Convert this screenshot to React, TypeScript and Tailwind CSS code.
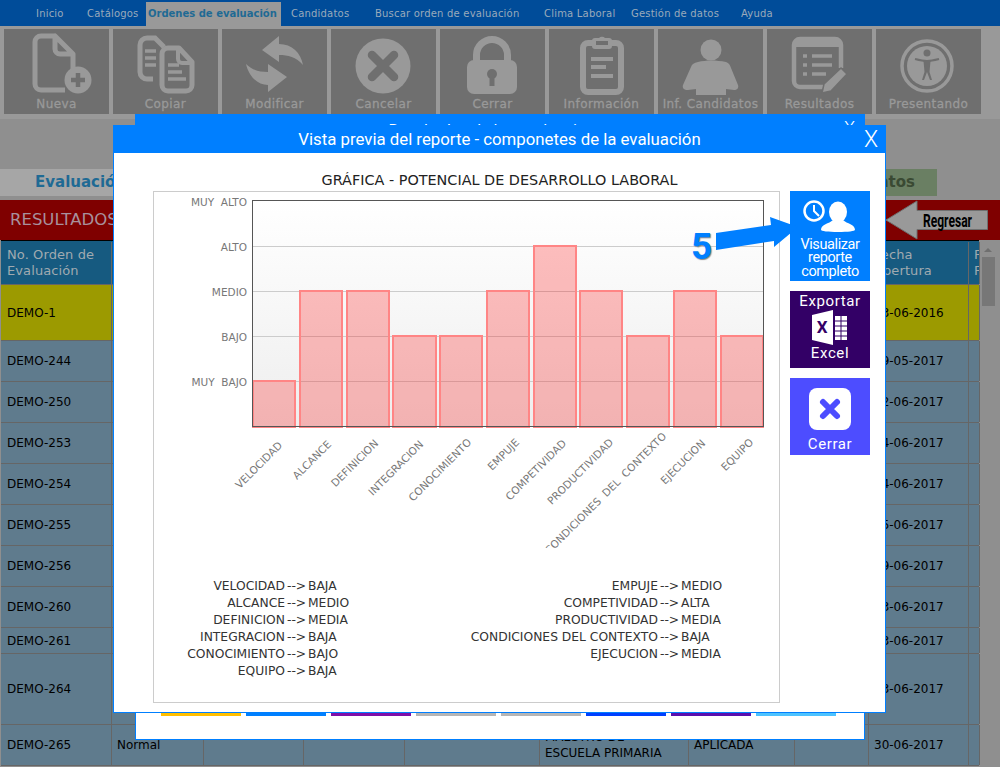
import React from "react";

const dejavu = "font-['DejaVu_Sans',sans-serif]";
const roboto = "font-['Roboto',sans-serif]";

const navItems = [
  { label: "Inicio", cls: "w-[51px]" },
  { label: "Catálogos", cls: "w-[59px]" },
  { label: "Ordenes de evaluación", cls: "w-[135px] pl-[2px] bg-[#999999] text-[#1f6a94] font-bold h-[24px] mt-[2px] leading-[24px] tracking-normal" },
  { label: "Candidatos", cls: "w-[84px] pl-[10px]" },
  { label: "Buscar orden de evaluación", cls: "w-[169px] pl-[10px]" },
  { label: "Clima Laboral", cls: "w-[87px] pl-[10px]" },
  { label: "Gestión de datos", cls: "w-[110px] pl-[10px]" },
  { label: "Ayuda", cls: "w-[60px] pl-[10px]" },
];

const L = "#999999";
const D = "#6f6f6f";

function IconNueva() {
  return (
    <>
      <path d="M51 7H37a6 6 0 0 0-6 6v42a6 6 0 0 0 6 6h24M69 43V25L51 7v13a5 5 0 0 0 5 5h13" fill="none" stroke={L} strokeWidth="5" strokeLinejoin="round" />
      <circle cx="74" cy="51" r="13.5" fill={L} />
      <path d="M74 44v14M67 51h14" stroke={D} strokeWidth="4.5" />
    </>
  );
}

function IconCopiar() {
  return (
    <>
      <path d="M40 50h-6a7 7 0 0 1-7-7V16a7 7 0 0 1 7-7h8l9 9" fill="none" stroke={L} strokeWidth="5" />
      <path d="M32 22h11M32 29h11M32 36h11" stroke={L} strokeWidth="3.5" />
      <path d="M55 19h11l13 14v23a6 6 0 0 1-6 6H55a6 6 0 0 1-6-6V25a6 6 0 0 1 6-6z" fill={D} stroke={L} strokeWidth="5" strokeLinejoin="round" />
      <path d="M65 20v10a4 4 0 0 0 4 4h10" fill="none" stroke={L} strokeWidth="4" />
      <path d="M55 36h11M55 43h14M55 50h18" stroke={L} strokeWidth="3.5" />
    </>
  );
}

function IconModificar() {
  return (
    <>
      <path d="M40 21L57 7v8c13 0 22 9 24 21-7-8-15-10-24-10v7z" fill={L} />
      <path d="M65 48L46 63v-7c-10 0-19-8-22-21 6 6 13 8 22 8v-8z" fill={L} />
    </>
  );
}

function IconCancelar() {
  return (
    <>
      <circle cx="52" cy="37" r="27.5" fill={L} />
      <path d="M41 26l22 22M63 26L41 48" stroke={D} strokeWidth="8.5" strokeLinecap="round" />
    </>
  );
}

function IconCerrar() {
  return (
    <>
      <path d="M36.500 33V26a15.500 15.500 0 0 1 31 0v7" fill="none" stroke={L} strokeWidth="7" />
      <rect x="27" y="31" width="50" height="34" rx="7" fill={L} />
      <circle cx="52" cy="45" r="5" fill={D} />
      <path d="M52 46v11" stroke={D} strokeWidth="5" />
    </>
  );
}

function IconInformacion() {
  return (
    <>
      <rect x="34" y="14" width="38" height="49" rx="5" fill="none" stroke={L} strokeWidth="6" />
      <path d="M46 9h4a4 4 0 0 1 6 0h4a3 3 0 0 1 3 3v5a3 3 0 0 1-3 3H46a3 3 0 0 1-3-3v-5a3 3 0 0 1 3-3z" fill={L} />
      <rect x="47" y="12" width="12" height="4" fill={D} />
      <path d="M42 30h22M42 38h15M42 47h22" stroke={L} strokeWidth="4" />
    </>
  );
}

function IconCandidatos() {
  return (
    <>
      <circle cx="53" cy="21" r="10.5" fill={L} />
      <path d="M40 33c8-2 18-2 28 0 3 1 4 3 5 6l7 17c1 3-1 5-4 5l-8-1v6H38v-6l-8 1c-4 0-6-2-5-5l8-18c1-3 3-4 7-5z" fill={L} />
    </>
  );
}

function IconResultados() {
  return (
    <>
      <path d="M56 58H33a6 6 0 0 1-6-6V16a6 6 0 0 1 6-6h35a6 6 0 0 1 6 6v23" fill="none" stroke={L} strokeWidth="4.500" />
      <path d="M28 12h45v6H28z" fill={L} />
      <path d="M36 27h4M45 27h20M36 36h4M45 36h20M36 45h4M45 45h14" stroke={L} strokeWidth="3.500" />
      <path d="M55 64l2-9 17-16 6 6-16 17z" fill={L} stroke={D} strokeWidth="1.500" />
    </>
  );
}

function IconPresentando() {
  return (
    <>
      <circle cx="51" cy="37" r="25" fill="none" stroke={L} strokeWidth="3.500" />
      <circle cx="51" cy="37" r="20" fill={L} />
      <circle cx="51" cy="24" r="3.500" fill={D} />
      <path d="M39 30c4 1 8 2 12 2s8-1 12-2" fill="none" stroke={D} strokeWidth="2" />
      <path d="M47.500 32h7l-1 11 2.500 8h-2l-3-8-3 8h-2l2.500-8z" fill={D} />
    </>
  );
}

const tiles = [
  { label: "Nueva", Icon: IconNueva },
  { label: "Copiar", Icon: IconCopiar },
  { label: "Modificar", Icon: IconModificar },
  { label: "Cancelar", Icon: IconCancelar },
  { label: "Cerrar", Icon: IconCerrar },
  { label: "Información", Icon: IconInformacion },
  { label: "Inf. Candidatos", Icon: IconCandidatos },
  { label: "Resultados", Icon: IconResultados },
  { label: "Presentando", Icon: IconPresentando },
];

const rows = [
  { id: "DEMO-1", date: "03-06-2016", h: "h-[56px]", bg: "bg-[#9c9a00]" },
  { id: "DEMO-244", date: "09-05-2017", h: "h-[41px]", bg: "bg-[#5f7b8d]" },
  { id: "DEMO-250", date: "12-06-2017", h: "h-[41px]", bg: "bg-[#5f7b8d]" },
  { id: "DEMO-253", date: "14-06-2017", h: "h-[41px]", bg: "bg-[#5f7b8d]" },
  { id: "DEMO-254", date: "14-06-2017", h: "h-[41px]", bg: "bg-[#5f7b8d]" },
  { id: "DEMO-255", date: "15-06-2017", h: "h-[41px]", bg: "bg-[#5f7b8d]" },
  { id: "DEMO-256", date: "19-06-2017", h: "h-[41px]", bg: "bg-[#5f7b8d]" },
  { id: "DEMO-260", date: "13-06-2017", h: "h-[41px]", bg: "bg-[#5f7b8d]" },
  { id: "DEMO-261", date: "13-06-2017", h: "h-[26px]", bg: "bg-[#5f7b8d]" },
  { id: "DEMO-264", date: "13-06-2017", h: "h-[71px]", bg: "bg-[#5f7b8d]" },
  { id: "DEMO-265", date: "30-06-2017", h: "h-[41px]", bg: "bg-[#5f7b8d]" },
];

const tableCols = "grid-cols-[111px_92px_100px_101px_135px_149px_106px_74px_100px_10px]";
const cell = "border-r border-[#666666] px-[5px] overflow-hidden flex items-center whitespace-nowrap";

const bars = [
  { x: 253, w: 42, y: 381 },
  { x: 300, w: 42, y: 291 },
  { x: 347, w: 42, y: 291 },
  { x: 393, w: 43, y: 336 },
  { x: 440, w: 42, y: 336 },
  { x: 487, w: 42, y: 291 },
  { x: 534, w: 42, y: 246 },
  { x: 580, w: 42, y: 291 },
  { x: 627, w: 42, y: 336 },
  { x: 674, w: 42, y: 291 },
  { x: 721, w: 42, y: 336 },
];

const xLabels = [
  { t: "VELOCIDAD", x: 283, y: 446 },
  { t: "ALCANCE", x: 332, y: 445 },
  { t: "DEFINICION", x: 379, y: 444 },
  { t: "INTEGRACION", x: 424, y: 445 },
  { t: "CONOCIMIENTO", x: 472, y: 443 },
  { t: "EMPUJE", x: 520, y: 443 },
  { t: "COMPETIVIDAD", x: 567, y: 444 },
  { t: "PRODUCTIVIDAD", x: 614, y: 443 },
  { t: "CONDICIONES  DEL  CONTEXTO", x: 667, y: 437 },
  { t: "EJECUCION", x: 706, y: 444 },
  { t: "EQUIPO", x: 754, y: 443 },
];

const yLabels = [
  { t: "MUY  ALTO", y: 206 },
  { t: "ALTO", y: 251 },
  { t: "MEDIO", y: 296 },
  { t: "BAJO", y: 341 },
  { t: "MUY  BAJO", y: 386 },
];

const legendLeft = [
  ["VELOCIDAD", "BAJA"],
  ["ALCANCE", "MEDIO"],
  ["DEFINICION", "MEDIA"],
  ["INTEGRACION", "BAJA"],
  ["CONOCIMIENTO", "BAJO"],
  ["EQUIPO", "BAJA"],
];

const legendRight = [
  ["EMPUJE", "MEDIO"],
  ["COMPETIVIDAD", "ALTA"],
  ["PRODUCTIVIDAD", "MEDIA"],
  ["CONDICIONES DEL CONTEXTO", "BAJA"],
  ["EJECUCION", "MEDIA"],
];

const colorBars = ["bg-[#ffbf00]", "bg-[#0080ff]", "bg-[#7f0fa8]", "bg-[#b5b5b5]", "bg-[#b5b5b5]", "bg-[#0040ff]", "bg-[#5a0fae]", "bg-[#4dc3ff]"];

function Chart() {
  return (
    <svg width="625" height="356" viewBox="154 192 625 356" className="block">
      <defs>
        <linearGradient id="plotBg" x1="0" y1="0" x2="0" y2="1">
          <stop offset="0" stopColor="#ffffff" />
          <stop offset="1" stopColor="#eeeeee" />
        </linearGradient>
      </defs>
      <rect x="252.5" y="200.5" width="511" height="226" fill="url(#plotBg)" />
      {[246, 291, 336, 381].map((y) => (
        <line key={y} x1="253" x2="763" y1={y + 0.5} y2={y + 0.5} stroke="#cccccc" />
      ))}
      {bars.map((b) => (
        <rect key={b.x} x={b.x} y={b.y} width={b.w} height={427 - b.y} fill="#ff0000" fillOpacity="0.25" stroke="#ff8585" strokeWidth="2" />
      ))}
      <rect x="252.5" y="200.5" width="511" height="226" fill="none" stroke="#555555" />
      <g fontFamily="DejaVu Sans, sans-serif" fontSize="10.5" fill="#777777">
        {yLabels.map((l) => (
          <text key={l.t} x="247" y={l.y} textAnchor="end" xmlSpace="preserve">
            {l.t}
          </text>
        ))}
        {xLabels.map((l) => (
          <text key={l.t} x={l.x} y={l.y} textAnchor="end" transform={`rotate(-45 ${l.x} ${l.y})`} xmlSpace="preserve">
            {l.t}
          </text>
        ))}
      </g>
    </svg>
  );
}

function LegendRow({ name, value, nameW }: { name: string; value: string; nameW: string }) {
  return (
    <div className="flex h-[17px] items-center whitespace-nowrap">
      <span className={`${nameW} text-right`}>{name}</span>
      <span className="w-[23px] pl-[2px]">--&gt;</span>
      <span>{value}</span>
    </div>
  );
}

export default function App() {
  return (
    <div className={`relative h-[767px] w-[1000px] overflow-hidden bg-[#8f8f8f] ${dejavu}`}>
      <nav className="flex h-[26px] bg-[#004c99] pl-[36px] text-[10px] leading-[28px] tracking-[0.2px] text-[#99aabb]">
        {navItems.map((n) => (
          <div key={n.label} className={`${n.cls} shrink-0 whitespace-nowrap`}>
            {n.label}
          </div>
        ))}
      </nav>

      <div className="flex h-[93px] gap-[4px] bg-[#999999] pl-[4px] pt-[3px]">
        {tiles.map(({ label, Icon }) => (
          <div key={label} className="flex h-[85px] w-[105px] flex-col items-center bg-[#6f6f6f]">
            <svg width="105" height="68" viewBox="0 0 105 68">
              <Icon />
            </svg>
            <span className="whitespace-nowrap text-[12px] leading-[15px] tracking-[0.4px] text-[#999999] [-webkit-text-stroke:0.3px_#999999]">{label}</span>
          </div>
        ))}
      </div>

      <div className="mt-[50px] flex h-[27px] items-center justify-between pr-[63px]">
        <div className="flex h-full w-[700px] items-center bg-[#a6a6a6] pl-[35px] text-[15px] font-bold text-[#1f6a94]">Evaluación</div>
        <div className="flex h-full w-[177px] items-center justify-end bg-[#6a7f63] pr-[22px] text-[15px] font-bold text-[#3a4a33]">Datos</div>
      </div>

      <div className="mt-[4px] flex h-[40px] items-center justify-between bg-[#7f0000] pl-[10px] pr-[11px]">
        <span className="text-[16.500px] text-[#a8909c]">RESULTADOS</span>
        <svg width="104" height="40" viewBox="0 0 104 40">
          <path d="M1 20L32 1v9.500h70.500v19H32V39z" fill="#999999" stroke="#6f6f6f" />
          <text x="38" y="27" textLength="49" lengthAdjust="spacingAndGlyphs" fontFamily="Roboto, sans-serif" fontWeight="700" fontSize="19" fill="#000000">
            Regresar
          </text>
        </svg>
      </div>

      <div className="flex">
        <div className="ml-[1px] w-[978px] border-t border-black text-[12px] text-black">
          <div className={`grid h-[44px] ${tableCols} bg-[#165a80] border-b border-[#666666] pt-[1px] text-[13px] leading-[16px] tracking-[0.1px] text-[#a0aab0]`}>
            <div className={`${cell} pl-[6px]`}>No. Orden de<br />Evaluación</div>
            <div className={cell} />
            <div className={cell} />
            <div className={cell} />
            <div className={cell} />
            <div className={cell} />
            <div className={cell} />
            <div className={cell} />
            <div className={cell}>Fecha<br />Apertura</div>
            <div className={cell}>F<br />F</div>
          </div>
          {rows.map((r) => (
            <div key={r.id} className={`grid ${r.h} ${tableCols} ${r.bg} border-b border-[#666666]`}>
              <div className={`${cell} pl-[6px]`}>{r.id}</div>
              <div className={cell}>Normal</div>
              <div className={cell} />
              <div className={cell} />
              <div className={cell} />
              <div className={`${cell} leading-[16px]`}>
                {r.id === "DEMO-265" ? <span>MAESTRO DE<br />ESCUELA PRIMARIA</span> : null}
              </div>
              <div className={cell}>APLICADA</div>
              <div className={cell} />
              <div className={cell}>{r.date}</div>
              <div className={cell} />
            </div>
          ))}
        </div>
        <div className="relative h-[526px] w-[18px]">
          <div className="mx-auto mt-[8px] h-0 w-0 border-x-[4px] border-b-[4px] border-x-transparent border-b-[#6f6f6f]" />
          <div className="mx-auto mt-[5px] h-[49px] w-[13px] bg-[#777777]" />
        </div>
      </div>

      {/* modal de atras */}
      <div className="absolute left-[135px] top-[114px] h-[626px] w-[730px] border border-[#007fff] bg-white">
        <div className={`relative flex h-[28px] justify-center bg-[#007fff] pt-[4px] text-[16px] text-white ${roboto}`}>
          Resultados de las evaluaciones
          <span className="absolute right-[9px] top-[3px] text-[18px] font-light leading-[20px]">X</span>
        </div>
        <div className="mt-[570px] flex gap-[5px] pl-[25px]">
          {colorBars.map((c, i) => (
            <div key={i} className={`h-[3px] w-[80px] ${c}`} />
          ))}
        </div>
      </div>

      {/* modal vista previa */}
      <div className="absolute left-[113px] top-[125px] h-[588px] w-[773px] border border-[#007fff] bg-white">
        <div className={`relative flex h-[27px] items-center justify-center bg-[#007fff] text-[16.800px] text-white ${roboto}`}>
          Vista previa del reporte - componetes de la evaluación
          <span className="absolute right-[7px] top-[2px] text-[23px] font-light leading-[24px]">X</span>
        </div>
        <div className="flex h-[38px] items-end justify-center pb-[2px] text-[14.400px] leading-[18px] text-[#222222]">
          GRÁFICA - POTENCIAL DE DESARROLLO LABORAL
        </div>
        <div className="flex items-start pl-[39px]">
          <div className="h-[512px] w-[627px] border border-[#cccccc]">
            <Chart />
            <div className="mt-[30px] flex text-[12.300px] text-[#333333]">
              <div className="w-[250px]">
                {legendLeft.map(([n, v]) => (
                  <LegendRow key={n} name={n} value={v} nameW="w-[131px]" />
                ))}
              </div>
              <div>
                {legendRight.map(([n, v]) => (
                  <LegendRow key={n} name={n} value={v} nameW="w-[254px]" />
                ))}
              </div>
            </div>
          </div>
          <div className={`ml-[10px] flex w-[80px] flex-col gap-[10px] text-white ${roboto}`}>
            <div className="flex h-[90px] flex-col items-center bg-[#007fff] text-[14.500px] leading-[13.500px] tracking-[-0.4px]">
              <svg width="60" height="40" viewBox="0 0 60 40" className="mt-[6px]">
                <circle cx="14" cy="14" r="9.500" fill="none" stroke="white" strokeWidth="2.500" />
                <path d="M14 8v6l5 5" fill="none" stroke="white" strokeWidth="2" />
                <ellipse cx="38" cy="15" rx="9" ry="10.500" fill="white" />
                <path d="M21 33c0-6 8-6 12-10h10c4 4 12 4 12 10 0 1-7 2-17 2s-17-1-17-2z" fill="white" />
              </svg>
              <span className="mt-[0.500px] text-center">Visualizar<br />reporte<br />completo</span>
            </div>
            <div className="flex h-[77px] flex-col items-center bg-[#330066] pt-[1px] text-[15px] leading-[18px] tracking-[0.6px]">
              <span>Exportar</span>
              <svg width="36" height="36" viewBox="0 0 36 36">
                <path d="M0 5l21-5v35L0 30z" fill="white" />
                <text x="10.500" y="23" textAnchor="middle" fontSize="17" fontWeight="700" fontFamily="Roboto, sans-serif" fill="#330066">X</text>
                <path d="M23 6h12v24H23z" fill="white" />
                <path d="M23 11h12M23 16h12M23 21h12M23 26h12M29 6v24" stroke="#330066" strokeWidth="1" />
              </svg>
              <span className="mt-[-2px]">Excel</span>
            </div>
            <div className="flex h-[77px] flex-col items-center bg-[#4d4dff] pt-[10px] text-[15px] leading-[18px] tracking-[0.6px]">
              <svg width="42" height="42" viewBox="0 0 42 42">
                <rect width="42" height="42" rx="8" fill="white" />
                <path d="M14 14l14 14M28 14L14 28" stroke="#4d4dff" strokeWidth="6" strokeLinecap="round" />
              </svg>
              <span className="mt-[5px]">Cerrar</span>
            </div>
          </div>
        </div>

        {/* flecha del paso 5 */}
        <svg width="90" height="40" viewBox="0 0 90 40" className="absolute left-[602px] top-[90px]">
          <path d="M0 17L55 9 54 1 82 11 58 31 58 25 0 34z" fill="#007fff" />
        </svg>
        <span className={`absolute left-[577px] top-[99px] text-[37px] font-bold leading-[44px] text-[#007fff] [text-shadow:1px_1px_1px_#888888] ${roboto}`}>5</span>
      </div>
    </div>
  );
}
